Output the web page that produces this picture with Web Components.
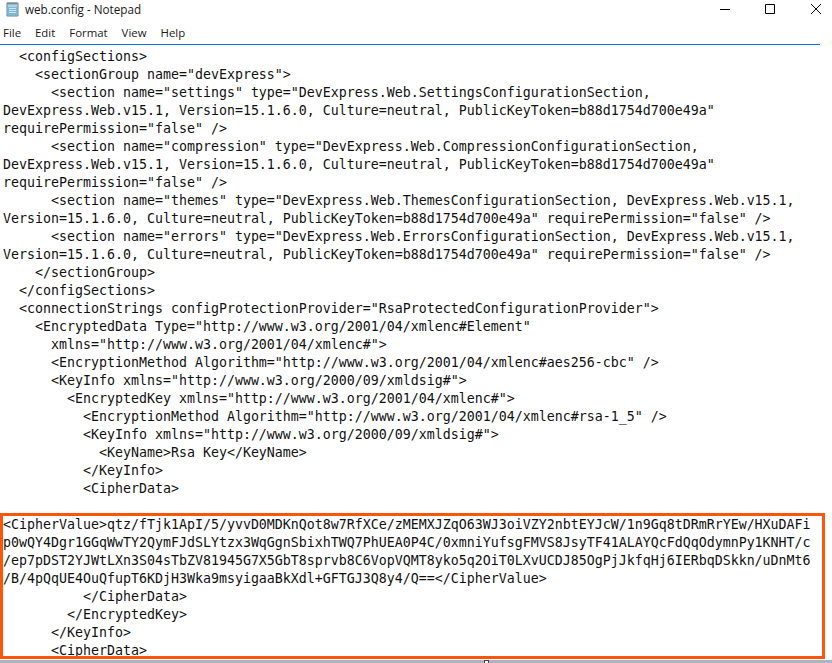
<!DOCTYPE html>
<html>
<head>
<meta charset="utf-8">
<title>web.config - Notepad</title>
<style>
html,body{margin:0;height:100%;overflow:hidden;background:#fff}
</style>
</head>
<body>
<np-window>
  <np-titlebar slot="title">web.config - Notepad</np-titlebar>
  <np-menu slot="menu"><span>File</span><span>Edit</span><span>Format</span><span>View</span><span>Help</span></np-menu>
  <np-editor>  &lt;configSections&gt;
    &lt;sectionGroup name="devExpress"&gt;
      &lt;section name="settings" type="DevExpress.Web.SettingsConfigurationSection,
DevExpress.Web.v15.1, Version=15.1.6.0, Culture=neutral, PublicKeyToken=b88d1754d700e49a"
requirePermission="false" /&gt;
      &lt;section name="compression" type="DevExpress.Web.CompressionConfigurationSection,
DevExpress.Web.v15.1, Version=15.1.6.0, Culture=neutral, PublicKeyToken=b88d1754d700e49a"
requirePermission="false" /&gt;
      &lt;section name="themes" type="DevExpress.Web.ThemesConfigurationSection, DevExpress.Web.v15.1,
Version=15.1.6.0, Culture=neutral, PublicKeyToken=b88d1754d700e49a" requirePermission="false" /&gt;
      &lt;section name="errors" type="DevExpress.Web.ErrorsConfigurationSection, DevExpress.Web.v15.1,
Version=15.1.6.0, Culture=neutral, PublicKeyToken=b88d1754d700e49a" requirePermission="false" /&gt;
    &lt;/sectionGroup&gt;
  &lt;/configSections&gt;
  &lt;connectionStrings configProtectionProvider="RsaProtectedConfigurationProvider"&gt;
    &lt;EncryptedData Type="http://www.w3.org/2001/04/xmlenc#Element"
      xmlns="http://www.w3.org/2001/04/xmlenc#"&gt;
      &lt;EncryptionMethod Algorithm="http://www.w3.org/2001/04/xmlenc#aes256-cbc" /&gt;
      &lt;KeyInfo xmlns="http://www.w3.org/2000/09/xmldsig#"&gt;
        &lt;EncryptedKey xmlns="http://www.w3.org/2001/04/xmlenc#"&gt;
          &lt;EncryptionMethod Algorithm="http://www.w3.org/2001/04/xmlenc#rsa-1_5" /&gt;
          &lt;KeyInfo xmlns="http://www.w3.org/2000/09/xmldsig#"&gt;
            &lt;KeyName&gt;Rsa Key&lt;/KeyName&gt;
          &lt;/KeyInfo&gt;
          &lt;CipherData&gt;

&lt;CipherValue&gt;qtz/fTjk1ApI/5/yvvD0MDKnQot8w7RfXCe/zMEMXJZqO63WJ3oiVZY2nbtEYJcW/1n9Gq8tDRmRrYEw/HXuDAFi
p0wQY4Dgr1GGqWwTY2QymFJdSLYtzx3WqGgnSbixhTWQ7PhUEA0P4C/0xmniYufsgFMVS8JsyTF41ALAYQcFdQqOdymnPy1KNHT/c
/ep7pDST2YJWtLXn3S04sTbZV81945G7X5GbT8sprvb8C6VopVQMT8yko5q2OiT0LXvUCDJ85OgPjJkfqHj6IERbqDSkkn/uDnMt6
/B/4pQqUE4OuQfupT6KDjH3Wka9msyigaaBkXdl+GFTGJ3Q8y4/Q==&lt;/CipherValue&gt;
          &lt;/CipherData&gt;
        &lt;/EncryptedKey&gt;
      &lt;/KeyInfo&gt;
      &lt;CipherData&gt;</np-editor>
  <np-taskstrip slot="footer"></np-taskstrip>
</np-window>

<script>
class NpWindow extends HTMLElement{
    constructor(){
        super()
        this.attachShadow({mode:"open"})
        this.shadowRoot.innerHTML = `
        <style>
            :host{
                display:flex;
                flex-direction:column;
                height:663px;
                overflow:hidden;
                background:#fff;
                color:#000;
            }
            #body{
                flex:1;
                min-height:0;
                display:flex;
                overflow:hidden;
            }
        </style>
        <slot name="title"></slot>
        <slot name="menu"></slot>
        <div id="body"><slot></slot></div>
        <slot name="footer"></slot>
        `
    }
}
customElements.define('np-window', NpWindow)

class NpTitlebar extends HTMLElement{
    constructor(){
        super()
        this.attachShadow({mode:"open"})
        this.shadowRoot.innerHTML = `
        <style>
            :host{
                display:flex;
                align-items:center;
                height:24px;
                padding:0 11px 6px 6px;
                box-sizing:border-box;
                font:11.7px "Open Sans",sans-serif;
                color:#1a1a1a;
            }
            #icon{margin-right:5px;flex:none}
            #name{flex:1}
            #controls{display:flex;align-items:flex-start;margin-top:-1px}
            svg{display:block}
            #min{margin-right:35px}
            #max{margin-right:36px}
        </style>
        <svg id="icon" width="14" height="15" viewBox="0 0 14 15">
            <path d="M1 1h11v13H1z" fill="#a9d3e6" stroke="#5d8aa3"/>
            <path d="M2 5h9v8H2z" fill="#7fb8d4"/>
            <path d="M3 6.5h7M3 8.5h7M3 10.5h7" stroke="#cfe6f1"/>
            <path d="M2 .5v2M4 .5v2M6 .5v2M8 .5v2M10 .5v2" stroke="#6b6b6b"/>
        </svg>
        <span id="name"><slot></slot></span>
        <div id="controls">
            <svg id="min" width="10" height="10" viewBox="0 0 10 10"><path d="M0 5.5h10" stroke="#000"/></svg>
            <svg id="max" width="10" height="10" viewBox="0 0 10 10"><path d="M.5 .5h9v9h-9z" fill="none" stroke="#000"/></svg>
            <svg width="10" height="10" viewBox="0 0 10 10"><path d="M0 0l10 10M10 0L0 10" stroke="#000" stroke-width="1"/></svg>
        </div>
        `
    }
}
customElements.define('np-titlebar', NpTitlebar)

class NpMenu extends HTMLElement{
    constructor(){
        super()
        this.attachShadow({mode:"open"})
        this.shadowRoot.innerHTML = `
        <style>
            :host{
                display:flex;
                gap:14px;
                align-items:center;
                width:820px;
                height:21px;
                padding:0 0 4px 3px;
                box-sizing:border-box;
                border-bottom:1px solid #0078d7;
                font:11.4px "Open Sans",sans-serif;
                color:#1a1a1a;
            }
        </style>
        <slot></slot>
        `
    }
}
customElements.define('np-menu', NpMenu)

class NpEditor extends HTMLElement{
    constructor(){
        super()
        this.attachShadow({mode:"open"})
        this.shadowRoot.innerHTML = `
        <style>
            :host{
                display:block;
                position:relative;
                flex:1;
                padding:3px 0 0 3px;
                font:13.29px/18px "DejaVu Sans Mono",monospace;
                color:#111;
                overflow:hidden;
            }
            #text{white-space:pre}
            #mark{
                position:absolute;
                left:0;
                top:468px;
                width:819px;
                height:140px;
                border:3px solid #ff5508;
                pointer-events:none;
            }
        </style>
        <div id="text"><slot></slot></div>
        <div id="mark"></div>
        `
    }
}
customElements.define('np-editor', NpEditor)

class NpTaskstrip extends HTMLElement{
    constructor(){
        super()
        this.attachShadow({mode:"open"})
        this.shadowRoot.innerHTML = `
        <style>
            :host{
                display:block;
                flex:none;
                height:3px;
                padding-left:484px;
                background:#aab4c4;
            }
            #grip{
                width:3px;
                height:2px;
                border:1px solid #444;
                border-bottom:0;
                background:#fff;
            }
        </style>
        <div id="grip"></div>
        `
    }
}
customElements.define('np-taskstrip', NpTaskstrip)
</script>
</body>
</html>
